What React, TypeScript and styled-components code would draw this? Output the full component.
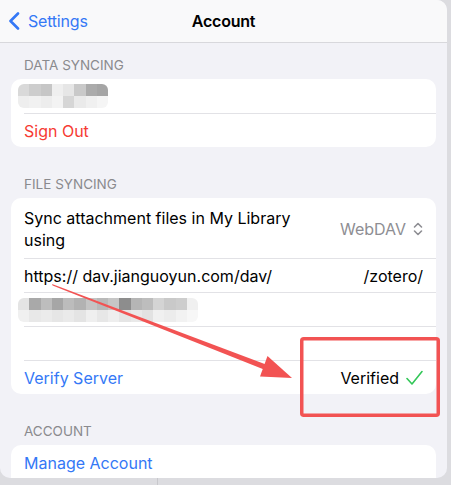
import React from 'react';
import styled, { createGlobalStyle } from 'styled-components';

const Global = createGlobalStyle`
  html, body { margin: 0; padding: 0; background: #dcdce0; }
  body {
    font-family: Inter, "Noto Sans", "Liberation Sans", sans-serif;
    -webkit-font-smoothing: antialiased;
  }
`;

const Screen = styled.div`
  width: 451px;
  height: 485px;
  display: flex;
  flex-direction: column;
  overflow: hidden;
  background: #dcdce0;
`;

const Sheet = styled.div`
  position: relative;
  width: 447px;
  height: 478px;
  flex: none;
  border-radius: 0 10px 10px 10px;
  overflow: hidden;
  background: #f2f2f7;
  display: flex;
  flex-direction: column;
`;

const BottomStrip = styled.div`
  flex: 1;
  display: flex;
`;

const StripPane = styled.div`
  width: 157px;
  border-right: 1px solid #c8c8cc;
`;

const NavBar = styled.header`
  height: 42px;
  flex: none;
  display: grid;
  grid-template-columns: 1fr auto 1fr;
  align-items: center;
  background: #f9f9fa;
  border-bottom: 1px solid #d8d8dc;
  padding: 0 8px;
`;

const BackButton = styled.div`
  display: flex;
  align-items: center;
  gap: 8px;
  color: #3478f6;
  font-size: 16px;
  letter-spacing: -0.2px;
`;

const Title = styled.div`
  font-weight: 600;
  font-size: 16px;
  letter-spacing: -0.2px;
  color: #000;
`;

const Content = styled.div`
  padding: 0 11px;
  display: flex;
  flex-direction: column;
`;

const SectionHeader = styled.div<{ $first?: boolean }>`
  padding: ${(p) => (p.$first ? '14px' : '29px')} 13px 6px;
  font-size: 13.5px;
  line-height: 16px;
  color: #8a8a8e;
  text-transform: uppercase;
`;

const Card = styled.div`
  background: #fff;
  border-radius: 10px;
  display: flex;
  flex-direction: column;
`;

const Row = styled.div<{ $tall?: boolean }>`
  box-sizing: border-box;
  height: ${(p) => (p.$tall ? '60px' : '34px')};
  margin-left: 13px;
  padding-right: 13px;
  display: flex;
  align-items: center;
  justify-content: space-between;
  gap: 12px;
  font-size: 16px;
  color: #000;
  & + & {
    border-top: 1px solid #e2e2e6;
  }
`;

const Label = styled.span<{ $tone?: 'red' | 'blue' }>`
  line-height: 22px;
  padding-top: 1px;
  color: ${(p) => (p.$tone === 'red' ? '#f63b33' : p.$tone === 'blue' ? '#3478f6' : '#000')};
`;

const Wrap = styled.span`
  line-height: 22px;
  max-width: 290px;
  padding-top: 1px;
`;

const Value = styled.span<{ $muted?: boolean }>`
  display: flex;
  align-items: center;
  gap: 7px;
  padding-top: 1px;
  color: ${(p) => (p.$muted ? '#8e8e93' : '#000')};
  white-space: nowrap;
`;

const Pixels = styled.div<{ $offset: number }>`
  margin-left: ${(p) => p.$offset}px;
  display: grid;
  grid-auto-flow: column;
  grid-template-rows: 12px 12px;
  grid-auto-columns: 11.25px;
  filter: blur(0.7px);
  border-radius: 6px;
  overflow: hidden;
`;

const Cell = styled.div<{ $c: string }>`
  background: ${(p) => p.$c};
`;

const Overlay = styled.svg`
  position: absolute;
  inset: 0;
  pointer-events: none;
`;

const blur1Top = ['#d9d9d9', '#cdcdcd', '#c6c6c6', '#efefef', '#e6e6e6', '#c9c9c9', '#ababab', '#a5a5a5'];
const blur1Bot = ['#eeeeee', '#f1f1f1', '#ededed', '#f3f3f3', '#d6d6d6', '#eaeaea', '#f0f0f0', '#f5f5f5'];
const blur2Top = ['#e4e4e4', '#a9a9a9', '#bdbdbd', '#a6a6a6', '#bcbcbc', '#b2b2b2', '#c4c4c4', '#b9b9b9', '#c6c6c6', '#8d8d8d', '#b5b5b5', '#bdbdbd', '#d4d4d4', '#c9c9c9', '#cdcdcd', '#f0f0f0'];
const blur2Bot = ['#f0f0f0', '#e8e8e8', '#ebebeb', '#e6e6e6', '#eaeaea', '#e4e4e4', '#efefef', '#e7e7e7', '#eeeeee', '#e5e5e5', '#e9e9e9', '#e2e2e2', '#f0f0f0', '#ececec', '#f2f2f2', '#f7f7f7'];

function Pixelated({ top, bottom, offset }: { top: string[]; bottom: string[]; offset: number }) {
  const cells: string[] = [];
  top.forEach((c, i) => {
    cells.push(c, bottom[i]);
  });
  return (
    <Pixels $offset={offset}>
      {cells.map((c, i) => (
        <Cell key={i} $c={c} />
      ))}
    </Pixels>
  );
}

const BackChevron = () => (
  <svg width="12" height="18" viewBox="0 0 12 18">
    <polyline points="10,1.5 2.5,9 10,16.5" fill="none" stroke="#3478f6" strokeWidth="2.6" strokeLinecap="round" strokeLinejoin="round" />
  </svg>
);

const UpDown = () => (
  <svg width="10" height="14" viewBox="0 0 10 14">
    <polyline points="1.5,5 5,1.5 8.5,5" fill="none" stroke="#8e8e93" strokeWidth="1.6" strokeLinecap="round" strokeLinejoin="round" />
    <polyline points="1.5,9 5,12.5 8.5,9" fill="none" stroke="#8e8e93" strokeWidth="1.6" strokeLinecap="round" strokeLinejoin="round" />
  </svg>
);

const Check = () => (
  <svg width="17" height="16" viewBox="0 0 17 16">
    <polyline points="1,8.5 6,14 16,1.5" fill="none" stroke="#34c759" strokeWidth="1.6" strokeLinecap="round" strokeLinejoin="round" />
  </svg>
);

export default function App() {
  return (
    <>
      <Global />
      <Screen>
        <Sheet>
          <NavBar>
            <BackButton>
              <BackChevron />
              Settings
            </BackButton>
            <Title>Account</Title>
            <span />
          </NavBar>
          <Content>
            <SectionHeader $first>Data Syncing</SectionHeader>
            <Card>
              <Row>
                <Pixelated top={blur1Top} bottom={blur1Bot} offset={-6} />
              </Row>
              <Row>
                <Label $tone="red">Sign Out</Label>
              </Row>
            </Card>

            <SectionHeader>File Syncing</SectionHeader>
            <Card>
              <Row $tall>
                <Wrap>Sync attachment files in My Library using</Wrap>
                <Value $muted>
                  WebDAV
                  <UpDown />
                </Value>
              </Row>
              <Row>
                <Label>https:// dav.jianguoyun.com/dav/</Label>
                <Value>/zotero/</Value>
              </Row>
              <Row>
                <Pixelated top={blur2Top} bottom={blur2Bot} offset={-6} />
              </Row>
              <Row />
              <Row>
                <Label $tone="blue">Verify Server</Label>
                <Value>
                  Verified
                  <Check />
                </Value>
              </Row>
            </Card>

            <SectionHeader>Account</SectionHeader>
            <Card>
              <Row>
                <Label $tone="blue">Manage Account</Label>
              </Row>
              <Row />
            </Card>
          </Content>

          <Overlay width="447" height="478" viewBox="0 0 447 478">
            <rect x="301.75" y="338.75" width="136.5" height="76.5" rx="2" fill="none" stroke="#f25353" strokeWidth="3.5" />
            <polygon points="52,284 52.6,285.6 264,369.5 266,364.5" fill="#f25353" />
            <polygon points="267.5,356 292,378 260,376.5" fill="#f25353" />
          </Overlay>
        </Sheet>
        <BottomStrip>
          <StripPane />
        </BottomStrip>
      </Screen>
    </>
  );
}
